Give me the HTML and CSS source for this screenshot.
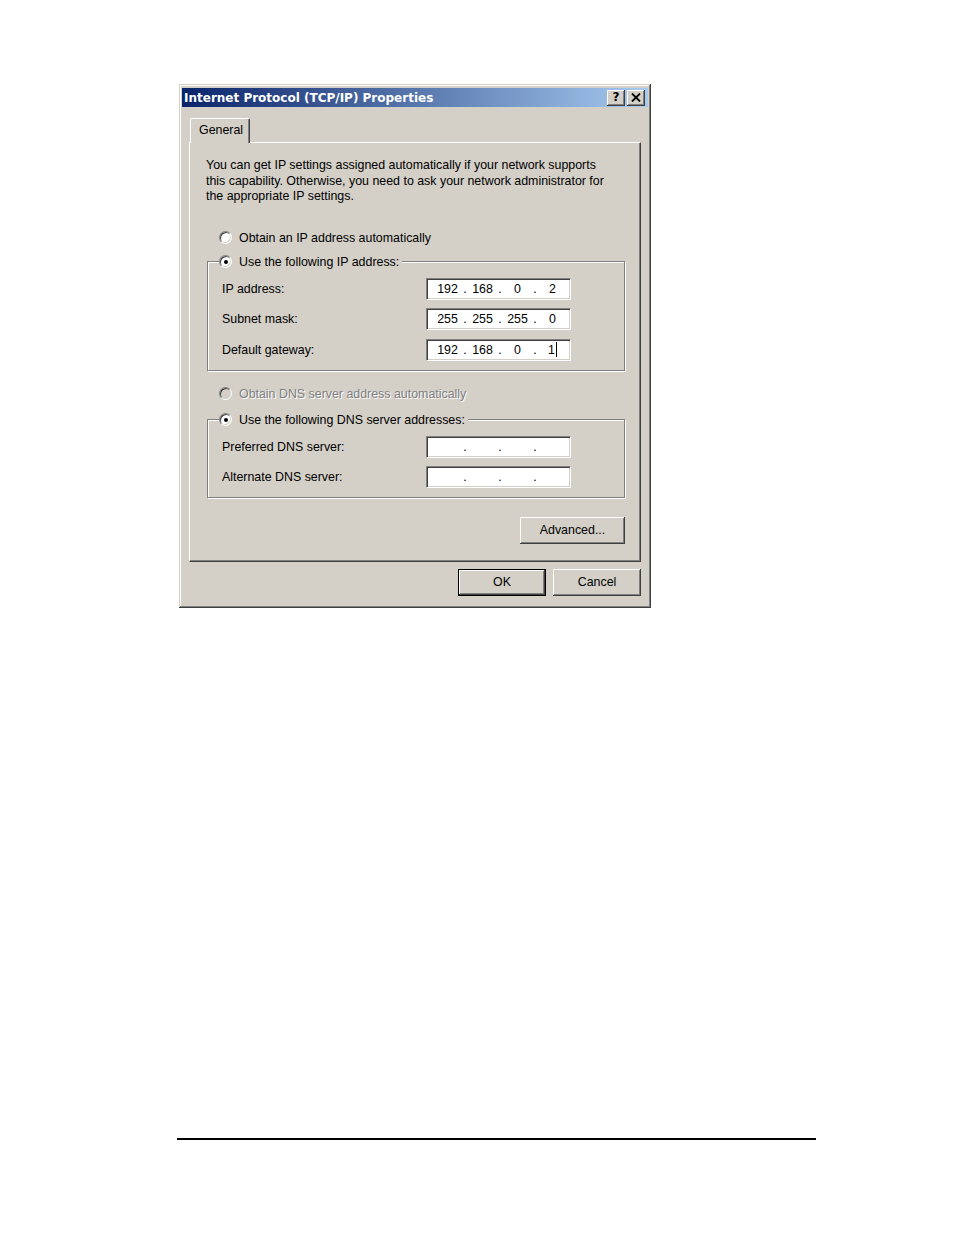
FILE: index.html
```html
<!DOCTYPE html>
<html lang="en">
<head>
<meta charset="utf-8">
<title>Internet Protocol (TCP/IP) Properties</title>
<link rel="stylesheet" href="styles.css">
</head>
<body>
<div class="dialog">
  <div class="titlebar">
    <span class="title">Internet Protocol (TCP/IP) Properties</span>
    <span class="tb-btn tb-help">?</span>
    <span class="tb-btn tb-close"><svg width="10" height="9" viewBox="0 0 10 9"><path d="M1 0.5 L9 8.5 M9 0.5 L1 8.5" stroke="#000" stroke-width="1.8" fill="none"/></svg></span>
  </div>
  <div class="body">
    <div class="tabs"><div class="tab">General</div></div>
    <div class="panel">
      <p class="intro">You can get IP settings assigned automatically if your network supports<br>this capability. Otherwise, you need to ask your network administrator for<br>the appropriate IP settings.</p>
      <div class="option first"><span class="radio"></span><span>Obtain an IP address automatically</span></div>
      <fieldset class="group">
        <legend><span class="radio checked"></span><span>Use the following IP address:</span></legend>
        <div class="rows">
          <span>IP address:</span>
          <div class="ipfield"><span class="oct">192</span><span class="dot">.</span><span class="oct">168</span><span class="dot">.</span><span class="oct">0</span><span class="dot">.</span><span class="oct">2</span></div>
          <span>Subnet mask:</span>
          <div class="ipfield"><span class="oct">255</span><span class="dot">.</span><span class="oct">255</span><span class="dot">.</span><span class="oct">255</span><span class="dot">.</span><span class="oct">0</span></div>
          <span>Default gateway:</span>
          <div class="ipfield"><span class="oct">192</span><span class="dot">.</span><span class="oct">168</span><span class="dot">.</span><span class="oct">0</span><span class="dot">.</span><span class="oct">1<span class="caret"></span></span></div>
        </div>
      </fieldset>
      <div class="option disabled"><span class="radio off"></span><span>Obtain DNS server address automatically</span></div>
      <fieldset class="group dns">
        <legend><span class="radio checked"></span><span>Use the following DNS server addresses:</span></legend>
        <div class="rows">
          <span>Preferred DNS server:</span>
          <div class="ipfield"><span class="oct"></span><span class="dot">.</span><span class="oct"></span><span class="dot">.</span><span class="oct"></span><span class="dot">.</span><span class="oct"></span></div>
          <span>Alternate DNS server:</span>
          <div class="ipfield"><span class="oct"></span><span class="dot">.</span><span class="oct"></span><span class="dot">.</span><span class="oct"></span><span class="dot">.</span><span class="oct"></span></div>
        </div>
      </fieldset>
      <div class="panel-actions"><button class="btn advanced">Advanced...</button></div>
    </div>
    <div class="dialog-actions">
      <button class="btn default">OK</button>
      <button class="btn">Cancel</button>
    </div>
  </div>
</div>
<div class="page-rule"></div>
</body>
</html>
```
FILE: styles.css
```css
body {
  margin: 0;
  background: #fff;
  font-family: "Liberation Sans", Arial, sans-serif;
  font-size: 12.4px;
  color: #000;
}

.dialog {
  margin: 84px 0 0 179px;
  width: 472px;
  box-sizing: border-box;
  padding: 4px 3px 3px;
  background: #d4d0c8;
  box-shadow: inset -1px -1px #404040, inset 1px 1px #d4d0c8, inset -2px -2px #808080, inset 2px 2px #fff;
}

.titlebar {
  height: 19px;
  display: flex;
  align-items: center;
  padding: 0 3px 0 2px;
  background: linear-gradient(to right, #0a246a, #a6caf0);
}

.title {
  flex: 1;
  color: #fff;
  font: bold 12px "DejaVu Sans", sans-serif;
  white-space: nowrap;
}

.tb-btn {
  width: 18px;
  height: 16px;
  box-sizing: border-box;
  display: flex;
  align-items: center;
  justify-content: center;
  background: #d4d0c8;
  box-shadow: inset -1px -1px #404040, inset 1px 1px #fff, inset -2px -2px #808080;
  font: bold 12px "DejaVu Sans", sans-serif;
  color: #000;
}

.tb-help {
  margin-right: 2px;
  padding-bottom: 1px;
}

.body {
  padding: 11px 7px 9px;
}

.tabs {
  display: flex;
  padding-left: 1px;
}

.tab {
  position: relative;
  z-index: 1;
  height: 25px;
  margin-bottom: -1px;
  box-sizing: border-box;
  padding: 0 6px 2px 8px;
  display: flex;
  align-items: center;
  background: #d4d0c8;
  border-left: 1px solid #fff;
  border-top: 1px solid #fff;
  border-right: 1px solid #404040;
  border-radius: 2px 2px 0 0;
  box-shadow: inset -1px 0 #808080;
}

.panel {
  border: 1px solid;
  border-color: #fff #404040 #404040 #fff;
  box-shadow: inset -1px -1px #808080;
  padding: 15px 15px 17px 16px;
}

.intro {
  margin: 0;
  line-height: 15.5px;
}

.option {
  display: flex;
  align-items: center;
  gap: 7px;
  height: 16px;
  margin-left: 13px;
}

.option.first {
  margin-top: 25px;
}

.option.disabled {
  margin-top: 15px;
  color: #808080;
  text-shadow: 1px 1px #fff;
}

.radio {
  width: 13px;
  height: 13px;
  flex: none;
  box-sizing: border-box;
  border-radius: 50%;
  border: 1px solid;
  border-color: #808080 #fff #fff #808080;
  box-shadow: inset 1px 1px #404040, inset -1px -1px #d4d0c8;
  background: #fff;
  display: flex;
  align-items: center;
  justify-content: center;
}

.radio.checked::after {
  content: "";
  width: 4px;
  height: 4px;
  border-radius: 50%;
  background: #000;
}

.radio.off {
  background: #d4d0c8;
}

.group {
  margin: 8px 0 0 1px;
  padding: 8px 0 9px 0;
  border: 1px solid #808080;
  box-shadow: inset 1px 1px #fff, 1px 1px #fff;
  min-width: 0;
}

.group.dns {
  margin-top: 10px;
}

.group legend {
  display: flex;
  align-items: center;
  gap: 7px;
  height: 16px;
  margin-left: 11px;
  padding: 0 3px 0 0;
  background: #d4d0c8;
}

.rows {
  display: grid;
  grid-template-columns: 204px 145px;
  row-gap: 8.5px;
  align-items: center;
  padding-left: 14px;
}

.dns .rows {
  row-gap: 8px;
}

.ipfield {
  height: 22px;
  box-sizing: border-box;
  display: flex;
  align-items: center;
  padding-left: 6px;
  background: #fff;
  border: 1px solid;
  border-color: #808080 #fff #fff #808080;
  box-shadow: inset 1px 1px #404040, inset -1px -1px #d4d0c8;
}

.oct {
  width: 29px;
  text-align: center;
  display: flex;
  align-items: center;
  justify-content: center;
}

.dot {
  width: 6px;
  text-align: center;
  color: #000;
}

.caret {
  display: inline-block;
  width: 1px;
  height: 15px;
  margin-left: 1px;
  background: #000;
}

.panel-actions {
  display: flex;
  justify-content: flex-end;
  margin-top: 19px;
}

.btn {
  height: 27px;
  padding: 0;
  border: none;
  background: #d4d0c8;
  font: inherit;
  color: #000;
  box-shadow: inset -1px -1px #404040, inset 1px 1px #fff, inset -2px -2px #808080;
}

.btn.advanced {
  width: 105px;
}

.dialog-actions {
  display: flex;
  justify-content: flex-end;
  gap: 7px;
  margin-top: 7px;
}

.dialog-actions .btn {
  width: 88px;
  height: 27px;
}

.btn.default {
  border: 1px solid #000;
}

.page-rule {
  margin: 530px 0 0 177px;
  width: 639px;
  height: 2px;
  background: #000;
}
```
